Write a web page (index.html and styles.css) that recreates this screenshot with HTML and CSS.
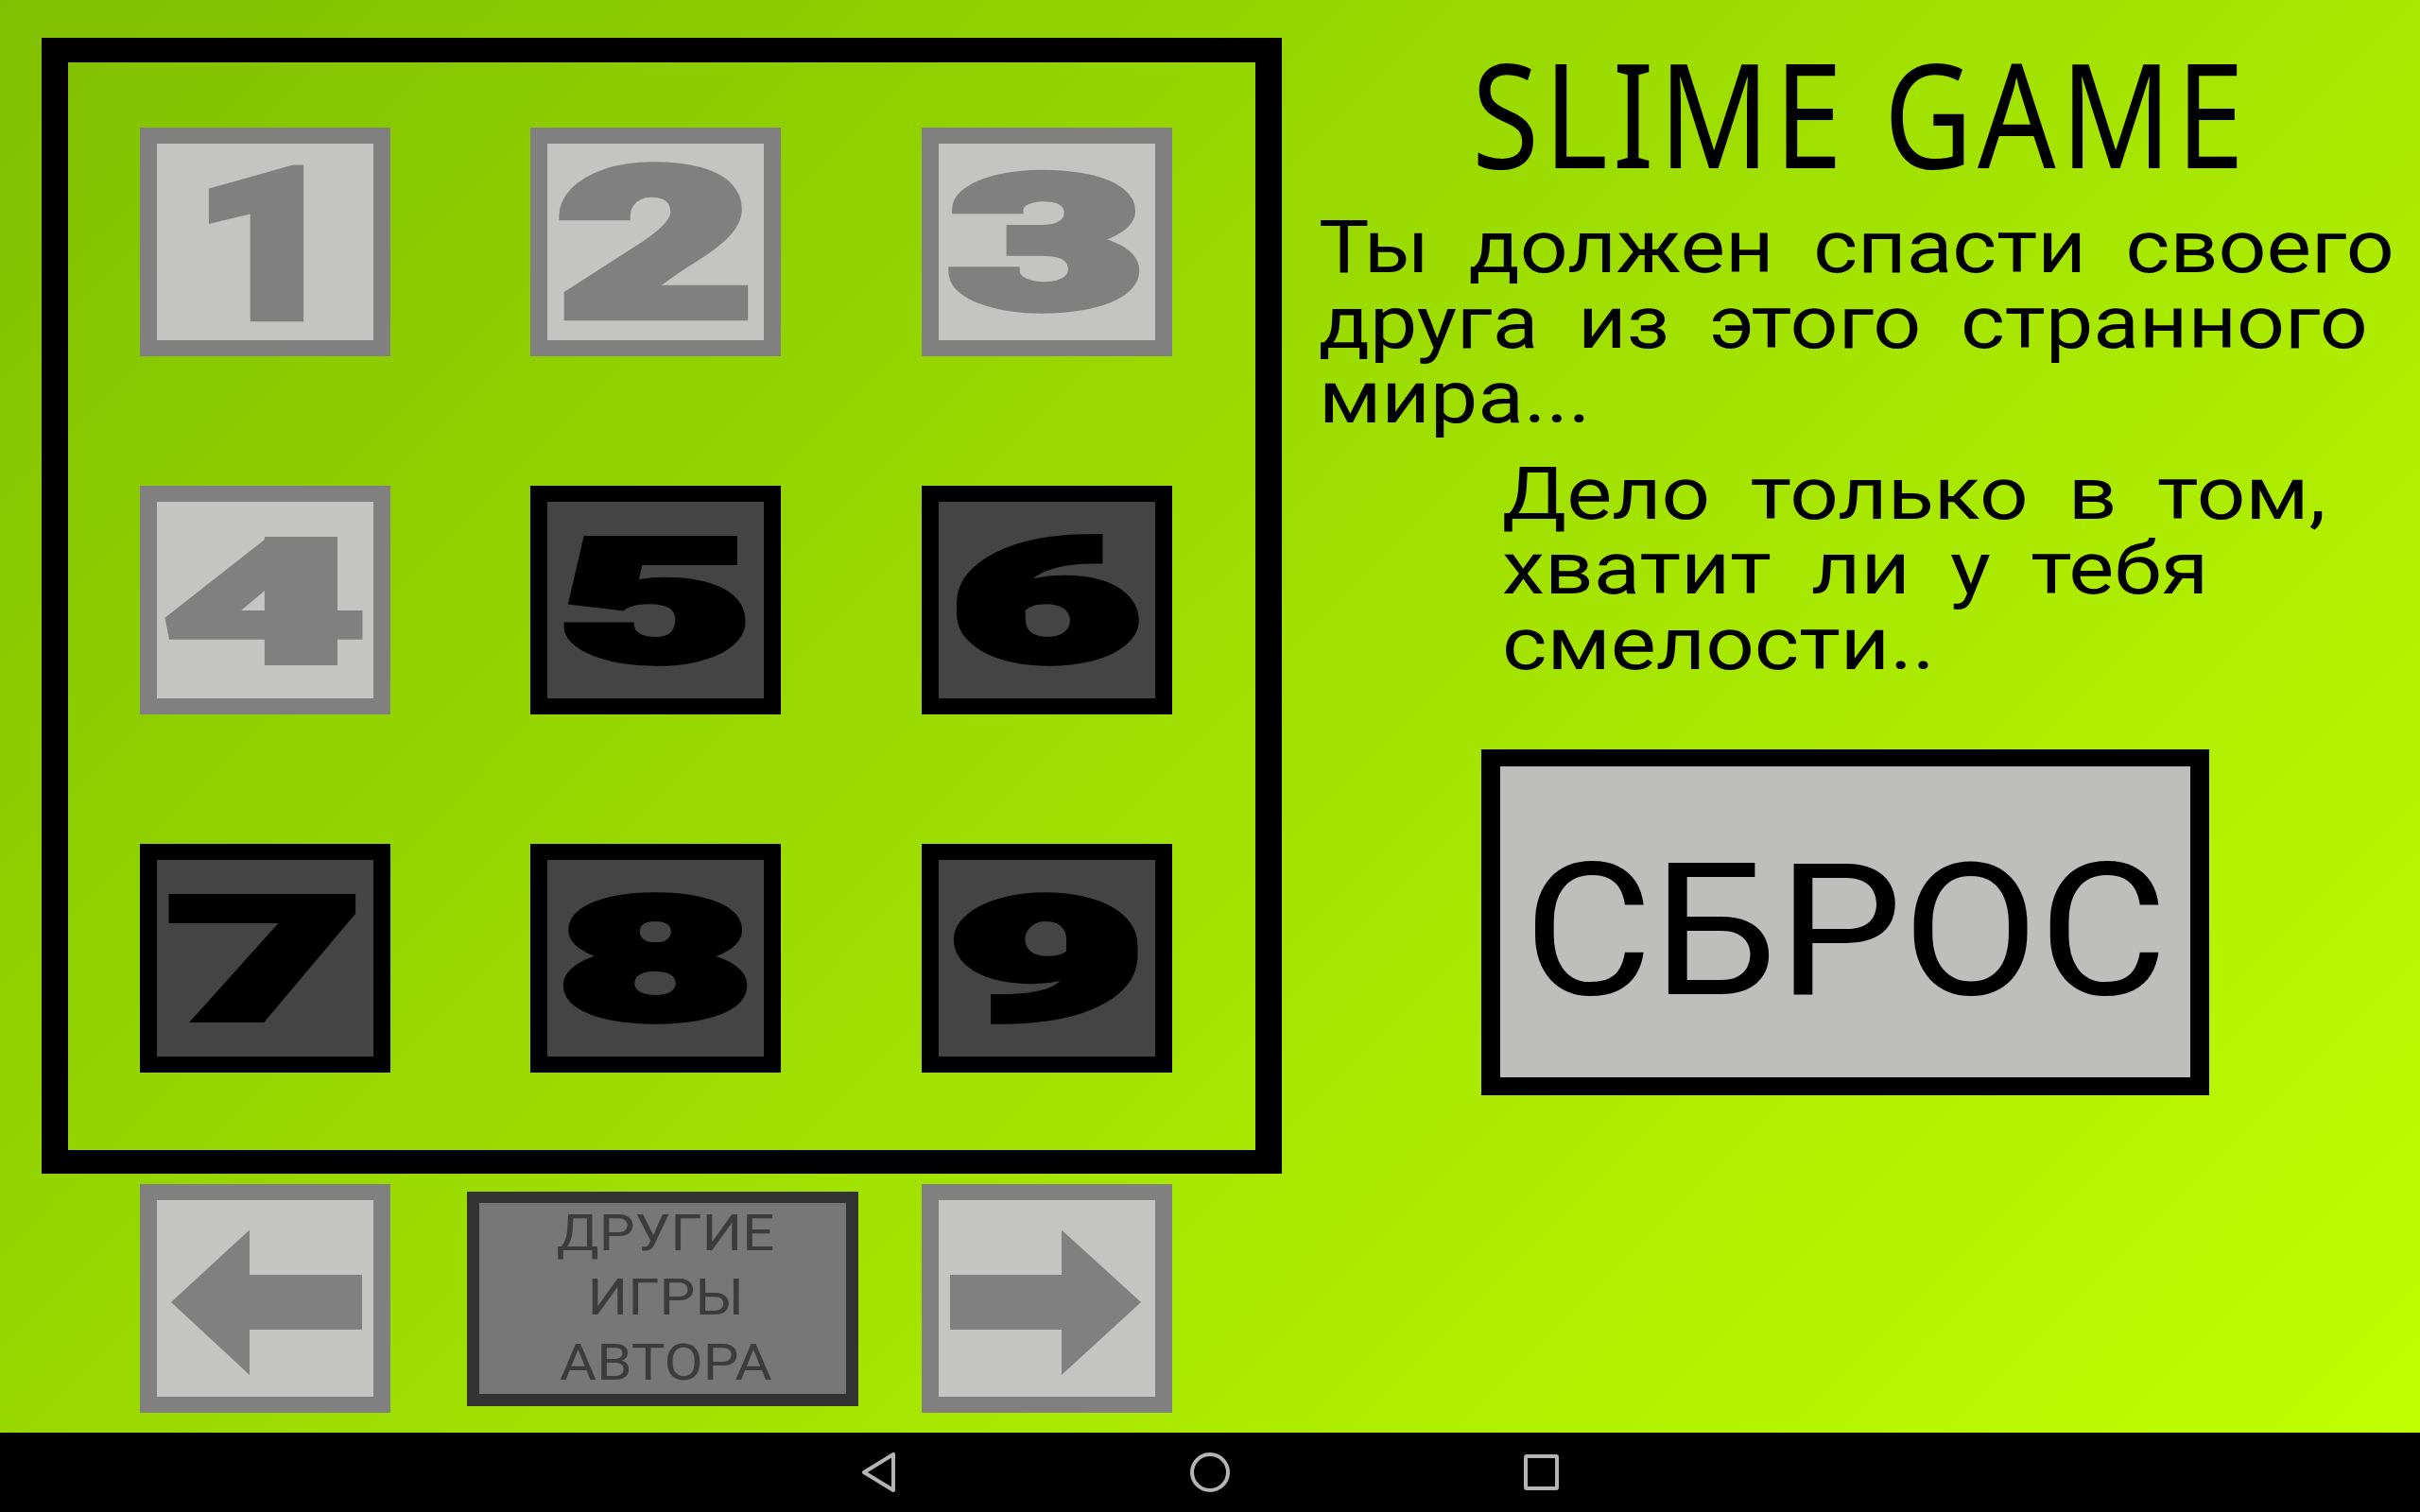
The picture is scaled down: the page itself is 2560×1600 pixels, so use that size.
FILE: index.html
```html
<!DOCTYPE html>
<html lang="ru">
<head>
<meta charset="utf-8">
<title>Slime Game</title>
<link rel="stylesheet" href="styles.css">
</head>
<body>
<main class="game">
  <section class="left">
    <div class="frame">
      <div class="tile light"><span class="digit d1">1</span></div>
      <div class="tile light"><span class="digit d2">2</span></div>
      <div class="tile light"><span class="digit d3">3</span></div>
      <div class="tile light"><span class="digit d4">4</span></div>
      <div class="tile dark"><span class="digit d5">5</span></div>
      <div class="tile dark"><span class="digit d6">6</span></div>
      <div class="tile dark"><span class="digit d7">7</span></div>
      <div class="tile dark"><span class="digit d8">8</span></div>
      <div class="tile dark"><span class="digit d9">9</span></div>
    </div>
    <div class="controls">
      <div class="tile light">
        <svg class="arrow" width="229" height="208" viewBox="0 0 229 208"><path d="M15 108 L98 31.5 V79 H217 V137 H98 V185 Z"/></svg>
      </div>
      <div class="more"><span>ДРУГИЕ</span><span>ИГРЫ</span><span>АВТОРА</span></div>
      <div class="tile light">
        <svg class="arrow" width="229" height="208" viewBox="0 0 229 208"><path d="M12 79 H130 V31.5 L214 108 L130 185 V137 H12 Z"/></svg>
      </div>
    </div>
  </section>
  <section class="right">
    <h1 class="title">SLIME GAME</h1>
    <p class="story first">Ты должен спасти своего<br>друга из этого странного<br>мира...</p>
    <p class="story second">Дело только в том,<br>хватит ли у тебя<br>смелости..</p>
    <div class="reset"><span class="reset-label">СБРОС</span></div>
  </section>
</main>
<nav class="navbar">
  <svg class="nav-back" width="36" height="42" viewBox="0 0 36 42"><path d="M33 2 V40 L2 21 Z"/></svg>
  <svg class="nav-home" width="42" height="42" viewBox="0 0 42 42"><circle cx="21" cy="21" r="19"/></svg>
  <svg class="nav-recent" width="37" height="38" viewBox="0 0 37 38"><rect x="2" y="2" width="33" height="34" rx="1"/></svg>
</nav>
</body>
</html>
```
FILE: styles.css
```css
* { box-sizing: border-box; }
html, body { margin: 0; padding: 0; }
body {
  width: 2560px;
  height: 1600px;
  overflow: hidden;
  display: flex;
  flex-direction: column;
  font-family: Roboto, "Liberation Sans", sans-serif;
  color: #000;
}
.game {
  height: 1516px;
  display: flex;
  padding: 40px 0 0 44px;
  background: linear-gradient(135deg, #80c000, #c0ff00);
}
.left { width: 1312px; flex: none; }
.frame {
  width: 1312px;
  height: 1202px;
  border: solid #000;
  border-width: 26px 28px 25px;
  padding: 69px 0 0 76px;
  display: grid;
  grid-template-columns: 265px 266px 265px;
  grid-template-rows: repeat(3, 242px);
  column-gap: 148px;
  row-gap: 137px;
}
.tile {
  width: 265px;
  height: 242px;
  border-style: solid;
  border-width: 17px 18px;
  display: flex;
  align-items: center;
  justify-content: center;
}
.light { border-color: #808080; background: #c4c4c2; color: #808080; }
.dark { border-color: #000; background: #444; color: #000; }
.digit {
  font-family: Roboto, sans-serif;
  font-weight: 900;
  font-size: 180px;
  line-height: 1;
  -webkit-text-stroke: 8px currentColor;
}
.d1 { transform: translate(3px, 5px) scale(1.5, 1.22); }
.d2 { transform: translate(0, 4px) scale(2, 1.22); }
.d3 { transform: translate(0, 3px) scale(2, 1.09); }
.d4 { transform: translate(-1px, 4px) scale(2.05, 1); }
.d5 { transform: translate(0, 3px) scale(1.97, 1); }
.d6 { transform: translate(-1px, 3px) scale(1.93, 1); }
.d7 { transform: translate(0, 3px) scale(1.97, 1); }
.d8 { transform: translate(0, 3px) scale(2, 1); }
.d9 { transform: translate(0, 3px) scale(2, 1); }
.controls {
  margin-top: 11px;
  padding-left: 104px;
  display: flex;
  align-items: center;
}
.arrow { flex: none; fill: #808080; }
.more {
  width: 414px;
  height: 227px;
  margin: 0 67px 0 81px;
  border: solid #333;
  border-width: 12px 13px 13px;
  background: #777;
  color: #3c3c3c;
  display: flex;
  flex-direction: column;
  align-items: center;
  justify-content: center;
  font-size: 53px;
  line-height: 68.5px;
  padding: 0 0 0 6px;
}
.more span { transform: scaleX(1.13); }
.right { flex: 1; min-width: 0; }
.title {
  margin: 0;
  width: 1224px;
  text-align: center;
  font-family: "Noto Sans", sans-serif;
  font-weight: 400;
  font-size: 154px;
  line-height: 156px;
  letter-spacing: 6px;
  transform: scaleX(0.84);
}
.story {
  width: fit-content;
  margin: 0;
  font-size: 78px;
  line-height: 79.5px;
  word-spacing: 17px;
  white-space: nowrap;
  transform-origin: left center;
}
.first { margin: 26px 0 0 39px; transform: scaleX(1.147); }
.second { margin: 22px 0 0 233px; transform: scaleX(1.162); }
.reset {
  width: 770px;
  height: 366px;
  margin: 72px 0 0 211px;
  border: solid #000;
  border-width: 18px 20px 19px;
  background: #bebebc;
  display: flex;
  align-items: center;
  justify-content: center;
  padding-top: 20px;
  font-size: 194px;
  line-height: 1;
}
.reset-label { transform: scaleX(1.08); }
.navbar {
  height: 84px;
  background: #000;
  display: flex;
  align-items: center;
  padding-left: 912px;
  gap: 311px;
}
.navbar svg { flex: none; fill: none; stroke: #b4b4b4; stroke-width: 4; stroke-linejoin: round; }
```
